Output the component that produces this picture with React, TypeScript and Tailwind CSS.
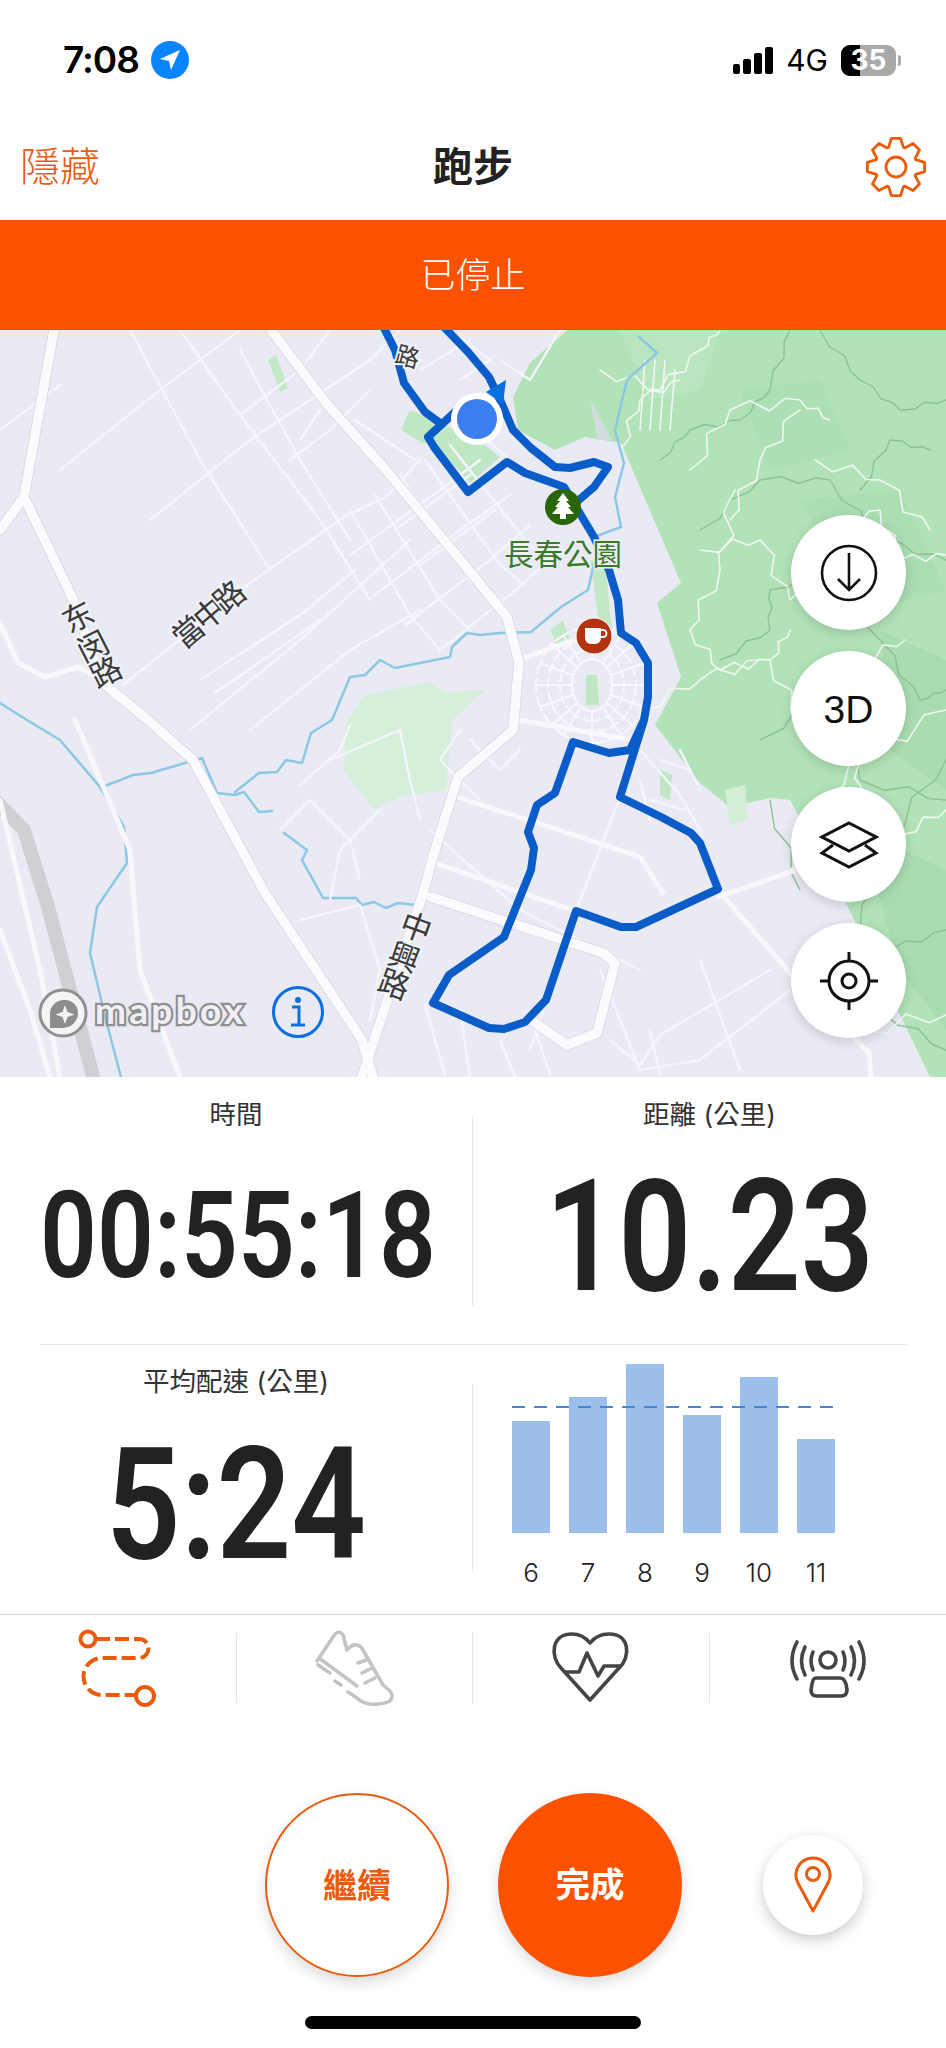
const majorRoads = [
  "271,0 326,73 386,140 458,227 507,287 519,333 513,400 458,447 434,523 422,567 374,710 362,747",
  "148,390 193,430 265,563 362,710 373,747",
  "54,0 30,133 24,167 0,200",
  "24,167 72,267 103,353 148,390",
  "431,567 603,623 615,633 597,703 567,715 531,690",
];

const mediumRoads = [
  "0,293 18,333 45,347 78,337 115,357",
  "519,330 573,310",
  "519,390 633,410",
  "718,560 790,643 869,723 871,747",
  "718,567 796,540",
  "0,470 40,640 60,747",
  "0,600 30,680 50,747",
  "75,390 130,520 140,640 180,747",
  "458,467 640,527 663,563",
  "434,533 573,580",
];

const thinRoads = [
  "123,355 250,253 344,187 386,167 420,130",
  "190,400 300,310 410,210",
  "150,190 250,110 370,30 400,0",
  "60,140 160,60 240,0",
  "0,100 60,55",
  "200,350 300,285 355,240",
  "130,0 200,130 270,240",
  "180,0 240,85 320,190 370,270",
  "240,20 300,130 350,210",
  "330,0 300,40 240,85",
  "370,60 330,100 290,130",
  "350,180 410,285 440,320",
  "375,165 440,270 470,300",
  "400,145 470,250 500,270",
  "425,130 500,235 525,255",
  "450,115 525,210 550,235",
  "350,225 440,160 480,130",
  "375,265 460,200 510,165",
  "405,295 490,230 530,195",
  "440,320 510,265 555,225",
  "395,200 470,145",
  "420,235 495,180",
  "470,95 510,130",
  "215,363 320,290",
  "250,400 350,320 420,280",
  "300,455 340,420 350,395",
  "430,500 520,580 640,640",
  "620,467 576,581 530,720",
  "640,420 680,465 700,500",
  "380,480 340,520 330,570",
  "280,500 310,470 350,510 360,550",
  "300,590 360,575 380,640 370,690",
  "330,430 400,400 410,450 420,490",
  "460,400 440,430 480,470",
  "470,410 500,440 520,420",
  "425,675 445,745",
  "460,680 470,747",
  "500,710 515,747",
  "535,700 550,745",
  "600,640 640,740",
  "650,700 660,745",
  "700,630 740,740",
  "610,710 640,735 660,705 770,640",
  "640,740 700,730 790,660",
  "640,450 650,490",
  "680,420 700,460",
  "660,430 690,440",
  "650,470 685,480",
  "560,0 530,50 500,30",
  "450,0 490,30 460,50",
  "420,40 470,10",
  "415,130 355,90",
  "320,80 300,110",
];

const contours = [
  "660,130 690,100 740,90 770,60 790,0",
  "700,200 760,150 830,150 880,210 946,230",
  "820,0 860,50 900,80 946,70",
  "720,330 770,300 770,260 830,240",
  "760,410 830,360 860,450 946,470",
  "800,640 860,600 880,520 946,430",
  "840,670 890,620 946,600",
  "830,240 880,310 920,370 946,360",
  "770,470 800,560",
  "860,160 890,110 930,120",
  "880,680 946,720",
];

const trails = [
  "600,40 660,60 700,20 720,0",
  "620,120 640,70 680,50",
  "690,140 730,80 800,70 830,90",
  "700,220 760,210 790,270 830,200 880,180 900,230 946,225",
  "735,160 720,240 690,300 720,340 770,330 790,300",
  "800,80 760,130 730,190",
  "640,380 700,350 760,330",
  "770,330 800,390 860,330 905,310",
  "860,430 860,490 830,540",
  "790,540 850,430 946,380",
  "860,700 946,685",
  "900,505 946,480",
  "815,130 880,150 930,200",
];

const terraces = ["640,100 645,30", "650,100 655,30", "660,100 665,30", "670,100 675,40"];

// breaks a straight polyline up so forest paths look hand drawn
function wiggle(points: string, amount: number) {
  const pts = points.split(" ").map((p) => p.split(",").map(Number));
  const out: string[] = [];
  pts.forEach((p, i) => {
    out.push(p.join(","));
    const n = pts[i + 1];
    if (!n) return;
    const dx = n[0] - p[0];
    const dy = n[1] - p[1];
    const sign = i % 2 === 0 ? 1 : -1;
    out.push(`${p[0] + dx * 0.3 - dy * amount * sign},${p[1] + dy * 0.3 + dx * amount * sign}`);
    out.push(`${p[0] + dx * 0.55 + dy * amount * sign},${p[1] + dy * 0.55 - dx * amount * sign}`);
    out.push(`${p[0] + dx * 0.8 - dy * amount * sign * 0.6},${p[1] + dy * 0.8 + dx * amount * sign * 0.6}`);
  });
  return out.join(" ");
}

function poly(points: string, color: string, width: number) {
  return (
    <polyline
      key={points + color}
      points={points}
      fill="none"
      stroke={color}
      strokeWidth={width}
      strokeLinejoin="round"
      strokeLinecap="round"
    />
  );
}

function MapGlyph({ x, y, r, children, cls, size = 31 }: { x: number; y: number; r: number; children: string; cls: string; size?: number }) {
  return (
    <text
      x={x}
      y={y}
      transform={`rotate(${r} ${x} ${y})`}
      textAnchor="middle"
      dominantBaseline="central"
      fontSize={size}
      stroke="#f1f2f8"
      strokeWidth={4}
      className={cls}
    >
      {children}
    </text>
  );
}

function MapCanvas() {
  const glyph = "fill-[#3a3a3a] [paint-order:stroke] font-['Noto_Sans_CJK_TC','Noto_Sans_CJK_SC',sans-serif]";
  return (
    <svg viewBox="0 0 946 747" className="absolute inset-0 w-full h-full">
      <rect width="946" height="747" fill="#e9eaf4" />

      {/* forest */}
      <polygon
        points="567,0 946,0 946,747 930,747 848,577 790,470 770,468 730,477 700,453 655,395 681,347 657,273 681,253 621,113 585,107 555,120 518,100 513,67 530,33"
        fill="#b2e3b8"
      />
      <polygon points="620,0 720,0 700,60 650,70" fill="#b9e6be" />
      <polygon points="740,60 820,50 850,120 770,140" fill="#acdfb3" />
      <polygon points="800,170 900,160 946,260 860,280" fill="#abdeb2" />
      <polygon points="880,300 946,330 946,460 890,420" fill="#a9ddb0" />
      <polygon points="860,500 946,540 946,700 900,640" fill="#a9ddb0" />
      <polygon points="590,70 612,110 598,110" fill="#d3dde0" />
      <polygon points="344,440 345,395 365,365 430,352 445,362 485,360 452,390 446,460 398,467 374,480" fill="#d6efdb" />
      <polygon points="410,80 401,100 422,113 434,113 470,153 500,127 478,110" fill="#bfe7c4" />
      <polygon points="590,230 605,232 612,300 600,300" fill="#c2e8c6" />
      <polygon points="550,300 563,290 570,310 558,318" fill="#c2e8c6" />
      <polygon points="268,30 276,25 288,58 280,62" fill="#c2e8c6" />
      <polygon points="660,440 672,445 670,470 660,465" fill="#bfe7c4" />
      <polygon points="725,460 745,455 748,490 730,495" fill="#d2eed6" />
      <polygon points="586,345 597,345 599,375 586,375" fill="#bfe7c4" />

      {contours.map((l) => poly(wiggle(l, 0.05), "#8cc196", 1.4))}
      {trails.map((l) => poly(wiggle(l, 0.09), "#f2f7f2", 1.6))}
      {terraces.map((l) => poly(l, "#f2f7f2", 1.6))}

      {/* water */}
      {[
        "0,373 27,390 60,410 100,457 124,497 127,533 97,577 90,623 106,690 121,747",
        "100,458 133,445 151,443 202,428 217,463 235,465 244,462 259,482 272,481",
        "284,503 307,520 302,530 323,568 356,568 362,575 374,572 386,578 398,573 416,575",
        "235,462 259,443 277,442 286,430 302,433 311,403 332,390 350,347 365,345 380,330 395,338 450,327 452,317 467,303 480,305 500,303 531,302 561,277 588,260 594,233",
        "639,7 657,23 627,50 615,100 624,133 615,167 621,197 594,207",
      ].map((l) => poly(l, "#8cc8e4", 2.5))}

      {/* rail */}
      {poly("-5,470 24,500 48,577 78,690 94,750", "#cfd0d4", 14)}

      {/* roads */}
      {thinRoads.map((l) => poly(l, "#f5f6fb", 2.4))}
      {mediumRoads.map((l) => poly(l, "#f8f8fc", 5))}
      {majorRoads.map((l) => poly(l, "#d4d5df", 11))}
      {majorRoads.map((l) => poly(l, "#fbfbfe", 9.5))}

      {/* neighbourhood around the cafe */}
      <g fill="none" stroke="#f9f9fd" strokeWidth="2">
        <ellipse cx="592" cy="355" rx="20" ry="26" />
        <ellipse cx="592" cy="355" rx="32" ry="36" strokeDasharray="8 3" />
        <ellipse cx="592" cy="355" rx="44" ry="47" strokeDasharray="11 3" />
        <ellipse cx="592" cy="355" rx="56" ry="58" strokeDasharray="16 3" />
        <path d="M592 295V329M592 381V415M534 355H572M612 355H650M550 313L577 337M634 313L607 337M550 397L577 373M634 397L607 373M563 305L580 331M621 305L604 331M563 405L580 379M621 405L604 379M540 333L573 345M644 333L611 345M540 377L573 365M644 377L611 365" />
      </g>

      {/* route */}
      <g fill="none" stroke="#0a5cc8" strokeWidth="8" strokeLinejoin="round" strokeLinecap="round">
        <polyline points="383,-4 395,20 404,53 425,82 440,93" />
        <polyline points="443,-4 468,22 489,47 501,72 513,100 531,118 555,137 570,138 594,132 608,137 594,157 573,175 579,182 594,207 609,240 618,270 621,303 636,313 648,333 648,367 644,390 620,467 661,487 691,503 700,513 718,559 636,597 621,597 576,581 546,670 525,692 504,699 489,698 433,673 449,645 504,607 531,540 534,518 528,502 537,475 555,463 573,412 609,423 630,420 644,390" />
        <polyline points="455,82 428,107 434,117 468,162 507,132 525,143 564,157 579,182" />
      </g>

      {/* current position */}
      <polygon points="486,62 506,50 503,74" fill="#0a6fe0" />
      <circle cx="477" cy="89" r="26" fill="#fff" />
      <circle cx="477" cy="89" r="20" fill="#3b7ef0" />

      {/* poi */}
      <circle cx="563" cy="177" r="18" fill="#2a6608" />
      <path d="M563 163l6 8h-3l5 6h-3l6 7h-8v5h-6v-5h-8l6-7h-3l5-6h-3z" fill="#fff" />
      <circle cx="594" cy="306" r="18" fill="#b3330f" stroke="#fff" strokeWidth="1" />
      <path d="M585 298h16v10a6 6 0 0 1-6 6h-4a6 6 0 0 1-6-6z" fill="#fff" />
      <path d="M601 300h2a3 3 0 0 1 0 7h-2" fill="none" stroke="#fff" strokeWidth="2" />

      {/* labels */}
      <text
        x="563"
        y="222"
        textAnchor="middle"
        dominantBaseline="central"
        fontSize="29.5"
        stroke="#eef0f6"
        strokeWidth="3"
        className="fill-[#3a7a2a] [paint-order:stroke] font-['Noto_Sans_CJK_TC',sans-serif]"
      >
        長春公園
      </text>
      <MapGlyph x={77} y={285} r={-27} cls={glyph}>东</MapGlyph>
      <MapGlyph x={92} y={315} r={-27} cls={glyph}>闵</MapGlyph>
      <MapGlyph x={105} y={340} r={-27} cls={glyph}>路</MapGlyph>
      <MapGlyph x={187} y={300} r={-40} cls={glyph}>當</MapGlyph>
      <MapGlyph x={208} y={282} r={-40} cls={glyph}>中</MapGlyph>
      <MapGlyph x={228} y={265} r={-40} cls={glyph}>路</MapGlyph>
      <MapGlyph x={417} y={595} r={20} cls={glyph}>中</MapGlyph>
      <MapGlyph x={405} y={625} r={20} cls={glyph}>興</MapGlyph>
      <MapGlyph x={395} y={652} r={20} cls={glyph}>路</MapGlyph>
      <MapGlyph x={408} y={25} r={15} size={24} cls={glyph}>路</MapGlyph>

      {/* attribution */}
      <circle cx="63" cy="683" r="23" fill="#f4f4f7" stroke="#909090" strokeWidth="3" />
      <path d="M50 698v-14a14 14 0 0 1 14-14h1a13 13 0 0 1 13 13a15 15 0 0 1-15 15z" fill="#8d8d8d" />
      <path d="M65 675l2.500 7 7 2.500-7 2.500-2.500 7-2.500-7-7-2.500 7-2.500z" fill="#f4f4f7" />
      <text
        x="95"
        y="694"
        fontSize="37"
        textLength="148"
        stroke="#8f8f8f"
        strokeWidth="4.5"
        className="fill-[#efeff4] [paint-order:stroke] font-['Lato',sans-serif] font-bold"
      >
        mapbox
      </text>
      <circle cx="298" cy="682" r="24.500" fill="none" stroke="#0a6fe0" strokeWidth="3" />
      <circle cx="298" cy="670" r="3" fill="#0a6fe0" />
      <path d="M292 677h7v17M291 695h14" fill="none" stroke="#0a6fe0" strokeWidth="3" />
    </svg>
  );
}

function MapButton({ children }: { children: React.ReactNode }) {
  return (
    <div className="w-[115px] h-[115px] rounded-full bg-white flex items-center justify-center shadow-[0_3px_12px_rgba(0,0,0,0.16)]">
      {children}
    </div>
  );
}

function MapButtons() {
  return (
    <div className="absolute right-[40px] top-[185px] flex flex-col gap-[21px]">
      <MapButton>
        <svg width="60" height="60" viewBox="0 0 60 60" fill="none" stroke="#111" strokeWidth="2.6">
          <circle cx="30" cy="30" r="27" />
          <path d="M30 10V47M19 36L30 47L41 36" />
        </svg>
      </MapButton>
      <MapButton>
        <span className="pt-[3px] text-[39px] text-[#111] font-['Liberation_Sans',sans-serif]">3D</span>
      </MapButton>
      <MapButton>
        <svg width="60" height="50" viewBox="0 0 60 50" fill="none" stroke="#111" strokeWidth="3">
          <path d="M30 3L57 17L30 31L3 17Z" />
          <path d="M14 25L3 33L30 47L57 33L46 25" />
        </svg>
      </MapButton>
      <MapButton>
        <svg width="60" height="60" viewBox="0 0 60 60" fill="none" stroke="#111" strokeWidth="3">
          <circle cx="30" cy="30" r="20" />
          <circle cx="30" cy="30" r="7" />
          <path d="M30 1V10M30 50V59M1 30H10M50 30H59" />
        </svg>
      </MapButton>
    </div>
  );
}

function GearIcon() {
  const pts: string[] = [];
  for (let i = 0; i < 8; i++) {
    const a = (i * Math.PI) / 4 + Math.PI / 2;
    [[-0.36, 21], [-0.16, 29], [0.16, 29], [0.36, 21]].forEach(([o, r]) => {
      pts.push(`${(30 + Math.cos(a + o) * r).toFixed(1)},${(30 + Math.sin(a + o) * r).toFixed(1)}`);
    });
  }
  return (
    <svg width="60" height="60" viewBox="0 0 60 60" fill="none" stroke="#ea5b0c" strokeWidth="2.8" strokeLinejoin="round">
      <polygon points={pts.join(" ")} />
      <circle cx="30" cy="30" r="10" />
    </svg>
  );
}

function RouteIcon() {
  return (
    <svg width="88" height="80" viewBox="0 0 88 80" fill="none" stroke="#ea5b0c" strokeWidth="4" className="ml-[6px]">
      <circle cx="11" cy="11" r="7.500" />
      <path d="M19 11H62a9.500 9.500 0 0 1 0 19H25a18.500 18.500 0 0 0 0 37H59" strokeDasharray="14 5" />
      <circle cx="68" cy="68" r="9" />
    </svg>
  );
}

function ShoeIcon() {
  return (
    <svg width="85" height="80" viewBox="0 0 85 80" fill="none" stroke="#c4c4c4" strokeWidth="3.6" strokeLinejoin="round" strokeLinecap="round" className="mr-[3px]">
      <path d="M7 33L25 6Q30 2 33 7L37 22Q42 16 47 17Q51 18 53 22L73 57L80 63Q84 68 80 73Q72 77 60 76Q52 75 47 70L38 64" />
      <path d="M9 30L47 58M8 37L20 45M25 53L31 57" />
      <path d="M48 35L56 32M52 45L62 40M55 55L65 50" />
    </svg>
  );
}

function HeartIcon() {
  return (
    <svg width="88" height="76" viewBox="0 0 88 76" fill="none" stroke="#444" strokeWidth="3.6" strokeLinejoin="round">
      <path d="M43 70L14 38C3 27 4 4 25 4C33 4 39 8 43 13C47 8 53 4 62 4C83 4 84 27 72 38Z" />
      <path d="M17 42H32L40 23L51 46L57 36H75" />
    </svg>
  );
}

function SensorIcon() {
  return (
    <svg width="84" height="62" viewBox="0 0 84 62" fill="none" stroke="#444" strokeWidth="3.6" strokeLinecap="round">
      <circle cx="42" cy="23" r="8" />
      <path d="M27 15Q23 24 27 33M57 15Q61 24 57 33" />
      <path d="M19 10Q12 24 19 38M65 10Q72 24 65 38" />
      <path d="M11 5Q1 24 11 42M73 5Q83 24 73 42" />
      <path d="M30 41H54Q58 41 60 47L61 53Q61 59 55 59H31Q25 59 25 53L26 47Q27 41 30 41Z" />
    </svg>
  );
}

function StatLabel({ children }: { children: string }) {
  return <div className="h-[30px] leading-[30px] text-[26.500px] text-[#333] text-center">{children}</div>;
}

const barHeights = ["h-[112px]", "h-[136px]", "h-[169px]", "h-[118px]", "h-[156px]", "h-[94px]"];
const barLabels = ["6", "7", "8", "9", "10", "11"];

function PaceChart() {
  return (
    <div className="pl-[39px] pt-[18px]">
      <div className="relative flex items-end gap-[19px] h-[170px]">
        {barHeights.map((h) => (
          <div key={h} className={`w-[38px] bg-[#9cbfeb] ${h}`} />
        ))}
        <div className="absolute left-0 top-[43px] w-[323px] h-[2px] bg-[repeating-linear-gradient(90deg,#4b86d6_0_13px,transparent_13px_22px)]" />
      </div>
      <div className="flex gap-[19px] mt-[25px]">
        {barLabels.map((l) => (
          <div key={l} className="w-[38px] text-center text-[26px] leading-[30px] font-light text-[#222]">
            {l}
          </div>
        ))}
      </div>
    </div>
  );
}

export default function App() {
  const number = "text-center text-[#222] font-semibold font-['Roboto',sans-serif]";
  return (
    <div className="w-[946px] h-[2048px] bg-white overflow-hidden font-['Inter','Noto_Sans_CJK_TC',sans-serif]">
      {/* status bar */}
      <div className="h-[120px] flex items-center justify-between pl-[63px] pr-[45px]">
        <div className="flex items-center gap-[12px]">
          <span className="text-[37px] font-semibold tracking-[-1px] text-black">7:08</span>
          <div className="w-[38px] h-[38px] rounded-full bg-[#0a84ff] flex items-center justify-center">
            <svg width="24" height="24" viewBox="0 0 24 24" fill="#fff">
              <path d="M22 2L2 11L11 13L13 22Z" />
            </svg>
          </div>
        </div>
        <div className="flex items-center">
          <div className="flex items-end gap-[3px] h-[27px]">
            <div className="w-[7px] h-[10px] rounded-[2px] bg-black" />
            <div className="w-[8px] h-[15px] rounded-[2px] bg-black" />
            <div className="w-[8px] h-[21px] rounded-[2px] bg-black" />
            <div className="w-[8px] h-[27px] rounded-[2px] bg-black" />
          </div>
          <span className="ml-[13px] text-[30px] text-black">4G</span>
          <div className="relative ml-[13px] w-[55px] h-[31px] rounded-[9px] bg-[#a9a9a9] overflow-hidden flex items-center justify-center">
            <div className="absolute left-0 top-0 bottom-0 w-[19px] bg-black" />
            <span className="relative text-[28px] leading-none font-bold text-white">35</span>
          </div>
          <div className="ml-[2px] w-[3px] h-[11px] rounded-r bg-[#a9a9a9]" />
        </div>
      </div>

      {/* header */}
      <div className="h-[100px] pb-[6px] flex items-center justify-between pl-[20px] pr-[20px]">
        <span className="w-[120px] text-[40px] font-light text-[#ea5b0c]">隱藏</span>
        <span className="text-[40px] font-bold text-[#222]">跑步</span>
        <div className="w-[120px] flex justify-end">
          <GearIcon />
        </div>
      </div>

      <div className="h-[110px] bg-[#fc5200] flex items-center justify-center text-[35px] font-light text-white">已停止</div>

      {/* map */}
      <div className="relative h-[747px] overflow-hidden">
        <MapCanvas />
        <MapButtons />
      </div>

      {/* stats */}
      <div className="h-[267px] flex">
        <div className="w-[472px] pt-[22px]">
          <StatLabel>時間</StatLabel>
          <div className={`mt-[32px] h-[150px] leading-[150px] text-[120px] scale-x-[0.83] ${number}`}>00:55:18</div>
        </div>
        <div className="w-px h-[190px] mt-[39px] bg-[#e6e6e6]" />
        <div className="flex-1 pt-[22px]">
          <StatLabel>距離 (公里)</StatLabel>
          <div className={`mt-[33px] h-[150px] leading-[150px] text-[156px] scale-x-[0.82] ${number}`}>10.23</div>
        </div>
      </div>
      <div className="mx-[39px] h-px bg-[#e6e6e6]" />
      <div className="h-[269px] flex">
        <div className="w-[472px] pt-[21px]">
          <StatLabel>平均配速 (公里)</StatLabel>
          <div className={`mt-[34px] h-[150px] leading-[150px] text-[156px] scale-x-[0.84] ${number}`}>5:24</div>
        </div>
        <div className="w-px h-[189px] mt-[38px] bg-[#e6e6e6]" />
        <PaceChart />
      </div>

      {/* tabs */}
      <div className="h-[106px] border-t border-[#d8d8d8] grid grid-cols-4 pt-[18px] items-start">
        <div className="h-[70px] flex items-center justify-center border-r border-[#e6e6e6]">
          <RouteIcon />
        </div>
        <div className="h-[70px] flex items-center justify-center border-r border-[#e6e6e6]">
          <ShoeIcon />
        </div>
        <div className="h-[70px] flex items-center justify-center border-r border-[#e6e6e6]">
          <HeartIcon />
        </div>
        <div className="h-[70px] flex items-center justify-center">
          <SensorIcon />
        </div>
      </div>

      {/* actions */}
      <div className="pt-[73px] pl-[265px] flex items-center">
        <div className="w-[184px] h-[184px] rounded-full bg-white border-[2.500px] border-[#ea5b0c] flex items-center justify-center text-[34px] font-bold text-[#ea5b0c] shadow-[0_6px_14px_rgba(0,0,0,0.14)]">
          繼續
        </div>
        <div className="ml-[49px] w-[184px] h-[184px] rounded-full bg-[#fc5200] flex items-center justify-center text-[34.500px] font-bold text-white shadow-[0_6px_14px_rgba(0,0,0,0.14)]">
          完成
        </div>
        <div className="ml-[81px] w-[100px] h-[100px] rounded-full bg-white flex items-center justify-center shadow-[0_5px_14px_rgba(0,0,0,0.2)]">
          <svg width="40" height="58" viewBox="0 0 40 58" fill="none" stroke="#ea5b0c" strokeWidth="3">
            <path d="M20 55L5 27A17 17 0 1 1 35 27Z" strokeLinejoin="round" />
            <circle cx="20" cy="18" r="6.500" />
          </svg>
        </div>
      </div>
      <div className="mt-[39px] mx-auto w-[336px] h-[13px] rounded-full bg-black" />
    </div>
  );
}
